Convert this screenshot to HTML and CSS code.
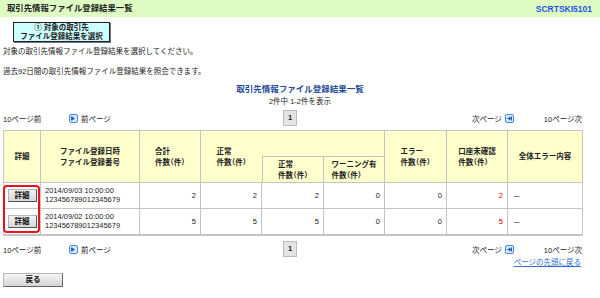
FILE: index.html
```html
<!DOCTYPE html>
<html lang="ja">
<head>
<meta charset="utf-8">
<link rel="stylesheet" href="styles.css">
</head>
<body>
<div class="titlebar">
  <h1 class="page-title">取引先情報ファイル登録結果一覧</h1>
  <span class="screen-code">SCRTSKI5101</span>
</div>
<div class="steps">
  <div class="step">① 対象の取引先<br>ファイル登録結果を選択</div>
</div>
<p class="msg">対象の取引先情報ファイル登録結果を選択してください。</p>
<p class="msg">過去92日間の取引先情報ファイル登録結果を照会できます。</p>
<h2 class="list-title">取引先情報ファイル登録結果一覧</h2>
<p class="count">2件中 1-2件を表示</p>

<div class="pager">
  <div class="pager-left">
    <span class="jump">10ページ前</span>
    <span class="prev"><svg class="ico" viewBox="0 0 9 9"><rect x="0.5" y="0.5" width="8" height="8" rx="1.5" fill="#d6e8fb" stroke="#4a8ad8"/><path d="M3 2.5 L6 4.5 L3 6.5 Z" fill="#1f5fc0"/><rect x="2" y="2.5" width="1" height="4" fill="#1f5fc0"/></svg>前ページ</span>
  </div>
  <span class="page-box">1</span>
  <div class="pager-right">
    <span class="next">次ページ<svg class="ico" viewBox="0 0 9 9"><rect x="0.5" y="0.5" width="8" height="8" rx="1.5" fill="#d6e8fb" stroke="#4a8ad8"/><path d="M2 4.5 H5.5 M4 3 L5.7 4.5 L4 6" stroke="#1f5fc0" stroke-width="1.1" fill="none"/><rect x="6" y="2.5" width="1" height="4" fill="#1f5fc0"/></svg></span>
    <span class="jump">10ページ次</span>
  </div>
</div>

<div class="table-wrap">
<table class="result">
  <colgroup>
    <col class="c-detail"><col class="c-file"><col class="c-num"><col class="c-num"><col class="c-num2"><col class="c-num"><col class="c-num2"><col class="c-num"><col class="c-err">
  </colgroup>
  <thead>
    <tr class="hr1">
      <th rowspan="2">詳細</th>
      <th rowspan="2"><span class="hb">ファイル登録日時<br>ファイル登録番号</span></th>
      <th rowspan="2"><span class="hb">合計<br>件数（件）</span></th>
      <th rowspan="2" class="grp"><span class="hb">正常<br>件数（件）</span></th>
      <th colspan="2" class="grp-top"></th>
      <th rowspan="2"><span class="hb">エラー<br>件数（件）</span></th>
      <th rowspan="2"><span class="hb">口座未確認<br>件数（件）</span></th>
      <th rowspan="2">全体エラー内容</th>
    </tr>
    <tr class="hr2">
      <th class="sub-first"><span class="hb">正常<br>件数（件）</span></th>
      <th><span class="hb">ワーニング有<br>件数（件）</span></th>
    </tr>
  </thead>
  <tbody>
    <tr class="r1">
      <td class="btn-cell"><button class="detail">詳細</button></td>
      <td class="file">2014/09/03 10:00:00<br>123456789012345679</td>
      <td class="num">2</td>
      <td class="num">2</td>
      <td class="num">2</td>
      <td class="num">0</td>
      <td class="num">0</td>
      <td class="num red">2</td>
      <td class="err">－</td>
    </tr>
    <tr class="r2">
      <td class="btn-cell"><button class="detail">詳細</button></td>
      <td class="file">2014/09/02 10:00:00<br>123456789012345679</td>
      <td class="num">5</td>
      <td class="num">5</td>
      <td class="num">5</td>
      <td class="num">0</td>
      <td class="num">0</td>
      <td class="num red">5</td>
      <td class="err">－</td>
    </tr>
  </tbody>
</table>
<div class="highlight"></div>
</div>

<div class="pager pager-bottom">
  <div class="pager-left">
    <span class="jump">10ページ前</span>
    <span class="prev"><svg class="ico" viewBox="0 0 9 9"><rect x="0.5" y="0.5" width="8" height="8" rx="1.5" fill="#d6e8fb" stroke="#4a8ad8"/><path d="M3 2.5 L6 4.5 L3 6.5 Z" fill="#1f5fc0"/><rect x="2" y="2.5" width="1" height="4" fill="#1f5fc0"/></svg>前ページ</span>
  </div>
  <span class="page-box">1</span>
  <div class="pager-right">
    <span class="next">次ページ<svg class="ico" viewBox="0 0 9 9"><rect x="0.5" y="0.5" width="8" height="8" rx="1.5" fill="#d6e8fb" stroke="#4a8ad8"/><path d="M2 4.5 H5.5 M4 3 L5.7 4.5 L4 6" stroke="#1f5fc0" stroke-width="1.1" fill="none"/><rect x="6" y="2.5" width="1" height="4" fill="#1f5fc0"/></svg></span>
    <span class="jump">10ページ次</span>
  </div>
</div>
<div class="totop"><a href="#">ページの先頭に戻る</a></div>
<div class="actions"><button class="back">戻る</button></div>
</body>
</html>
```
FILE: styles.css
```css
html, body {
  margin: 0;
  padding: 0;
  background: #fff;
}
body {
  width: 600px;
  font-family: "Liberation Sans", "Noto Sans CJK JP", sans-serif;
  font-size: 7.5px;
  color: #222;
}
.titlebar {
  height: 17px;
  background: #dffbc4;
  display: flex;
  align-items: center;
  justify-content: space-between;
  padding: 0 8px 0 7px;
}
.page-title {
  margin: 0;
  font-size: 8.4px;
  font-weight: bold;
  color: #222;
  line-height: 17px;
}
.screen-code {
  font-family: "Liberation Sans", sans-serif;
  font-size: 8.5px;
  font-weight: bold;
  color: #1d52e8;
}
.steps {
  padding: 5px 0 0 13px;
}
.step {
  width: 95px;
  height: 18px;
  background: #ccffff;
  border: 1px solid #222;
  box-shadow: 1px 1px 0 #777;
  text-align: center;
  font-weight: bold;
  line-height: 9px;
  font-size: 7.5px;
}
.msg {
  margin: 0;
  padding-left: 3px;
  line-height: 20px;
}
.list-title {
  margin: 0;
  text-align: center;
  font-size: 8.5px;
  font-weight: bold;
  color: #1f4a98;
  line-height: 14px;
}
.count {
  margin: 0;
  text-align: center;
  line-height: 12px;
}
.pager {
  margin: 2px 18px 0 3px;
  height: 16px;
  display: grid;
  grid-template-columns: 280px 14px 1fr;
  align-items: center;
}
.pager-left {
  display: flex;
  align-items: center;
}
.pager-left .jump {
  width: 66px;
}
.prev, .next {
  display: flex;
  align-items: center;
}
.prev .ico { margin-right: 3px; }
.next .ico { margin-left: 3px; }
.ico {
  width: 9px;
  height: 9px;
}
.pager-right {
  display: flex;
  align-items: center;
  justify-content: flex-end;
  gap: 30px;
}
.page-box {
  height: 14px;
  border: 1px solid #bcbcbc;
  background: #e4e4e4;
  font-weight: bold;
  text-align: center;
  line-height: 14px;
}
.table-wrap {
  position: relative;
  margin: 4px 0 0 3px;
  width: 579px;
}
.result {
  width: 579px;
  border-collapse: separate;
  border-spacing: 0;
  table-layout: fixed;
  border-top: 1px solid #c4c4c4;
  border-left: 1px solid #c4c4c4;
  border-bottom: 1px solid #c4c4c4;
}
.c-detail { width: 37px; }
.c-file { width: 99px; }
.c-num { width: 61px; }
.c-num2 { width: 62px; }
.c-err { width: 75px; }
.result th, .result td {
  border-right: 1px solid #c4c4c4;
  border-bottom: 1px solid #c4c4c4;
  padding: 0;
}
.result th {
  background: #ffffcc;
  font-weight: bold;
  text-align: center;
  line-height: 11px;
}
.hr1 th { height: 25px; }
.hr2 th { height: 25px; }
.result th.grp { border-right: none; }
.result th.sub-first { border-left: 1px solid #c4c4c4; }
.hb {
  display: inline-block;
  text-align: left;
  font-feature-settings: "halt";
}
.r1 td { height: 25px; }
.r2 td { height: 25px; }
.result td { background: #fff; }
.file {
  padding-left: 4px !important;
  line-height: 8.5px;
  white-space: nowrap;
}
.num {
  text-align: right;
  padding-right: 4px !important;
}
.red { color: #d20000; }
.err { padding-left: 5px !important; }
.btn-cell { text-align: center; }
.detail {
  width: 29px;
  height: 13px;
  padding: 0;
  margin: 0;
  font-family: inherit;
  font-size: 7.5px;
  font-weight: bold;
  color: #111;
  background: linear-gradient(#f2f2f2, #d9d9d9);
  border: 1px solid #b5b5b5;
  border-right-color: #555;
  border-bottom-color: #555;
  line-height: 11px;
}
.highlight {
  position: absolute;
  left: 0;
  top: 55px;
  width: 33px;
  height: 44px;
  border: 2px solid #e8141c;
  border-radius: 4px;
}
.pager-bottom {
  margin-top: 5px;
}
.totop {
  margin: 1px 19px 0 0;
  text-align: right;
  line-height: 10px;
}
.totop a {
  color: #2f6fd0;
}
.actions {
  padding: 5px 0 0 3px;
}
.back {
  width: 60px;
  height: 14px;
  padding: 0;
  font-family: inherit;
  font-size: 7.5px;
  font-weight: bold;
  color: #111;
  background: linear-gradient(#f4f4f4, #d6d6d6);
  border: 1px solid #b8b8b8;
  border-right-color: #666;
  border-bottom-color: #666;
  line-height: 12px;
}
```
